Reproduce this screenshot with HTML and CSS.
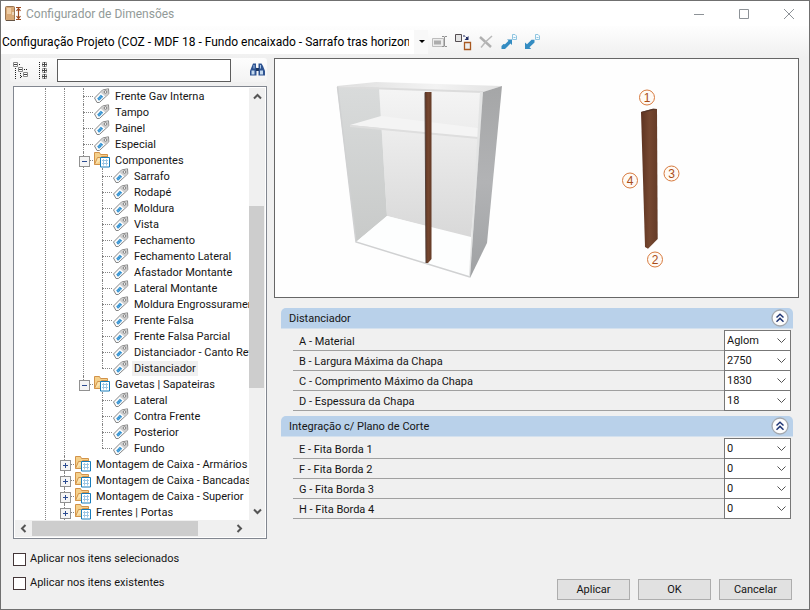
FILE: index.html
```html
<!DOCTYPE html>
<html lang="pt-BR">
<head>
<meta charset="utf-8">
<title>Configurador de Dimensões</title>
<link rel="stylesheet" href="styles.css">
</head>
<body>
<svg class="defs" aria-hidden="true">
  <defs>
    <symbol id="tag" viewBox="0 0 17 16">
      <path d="M1.500 10 9.500 2 15.500.800 15.800 5.800 6.400 14.500H4Z" fill="#fafafa" stroke="#858585" stroke-linejoin="round"/>
      <path d="M9.800 2.500 15 1.400l.3 4.200-2.900 2.800-4.600-3.600z" fill="#cfcfcf"/>
      <path d="M4.200 10.400 7.900 6.700 10.200 8.800 6 12.800Z" fill="#2f8fd0"/>
      <path d="m5.200 9.600 3 2.600M6.700 8.100l2.600 2.200" stroke="#8cc6ea" stroke-width=".6"/>
      <circle cx="12.500" cy="4" r="1.300" fill="#fff" stroke="#777" stroke-width=".9"/>
    </symbol>
    <symbol id="folder" viewBox="0 0 17 16">
      <path d="M1.500 12.500v-12h5l1 2h7v10z" fill="#f5d08a" stroke="#d2934a"/>
      <path d="m1.500 12.500 3-7h3l1-1h6" fill="#fbe3ad" stroke="#d2934a"/>
      <path d="M7.500 5.500h9v9.500h-9z" fill="#fff" stroke="#187cba"/>
      <path d="M9 8.500h6M9 11.500h6M10.500 7v6.500M13.500 7v6.500" stroke="#9cc6e4"/>
    </symbol>
    <symbol id="chevrons" viewBox="0 0 18 18">
      <circle cx="9" cy="9" r="8" fill="#fdfdfd" stroke="#a3a8ae" stroke-width="1.300"/>
      <path d="m5.500 8.500 3.500-3.300 3.500 3.300M5.500 12.700 9 9.400l3.500 3.300" fill="none" stroke="#1f3575" stroke-width="1.500"/>
    </symbol>
  </defs>
</svg>
<main class="window">
  <header class="titlebar">
    <svg class="app-icon" width="17" height="16" viewBox="0 0 17 16" aria-hidden="true">
      <rect x=".5" y=".5" width="9" height="14" rx="1" fill="#d9aa78" stroke="#987452"/>
      <path d="M2 2h4v6H2z" fill="#efcda5"/><path d="M8 6v3" stroke="#fff"/><path d="M1 14.500h9" stroke="#665443"/>
      <path d="M11 1.500h5M11 13.500h5M13.500 2v11m-2-8 2-2.500 2 2.500m-4 5 2 2.500 2-2.500" fill="none" stroke="#9c4a20" stroke-width="1.200"/>
    </svg>
    <h1>Configurador de Dimensões</h1>
    <button class="caption" aria-label="Minimizar"><svg width="12" height="12"><path d="M1 6.500h10" stroke="#8d9297"/></svg></button>
    <button class="caption" aria-label="Maximizar"><svg width="12" height="12"><path d="M1.500 1.500h9v9h-9z" fill="none" stroke="#8d9297"/></svg></button>
    <button class="caption" aria-label="Fechar"><svg width="12" height="12"><path d="m1 1 10 10M11 1 1 11" stroke="#8d9297"/></svg></button>
  </header>

  <div class="toolbar">
    <select class="project" aria-label="Configuração">
      <option>Configuração Projeto (COZ - MDF 18 - Fundo encaixado - Sarrafo tras horizontal)</option>
    </select>
    <button class="tool" aria-label="Renomear">
      <svg width="18" height="18"><path d="M1.500 5.500h11v8h-11z" fill="#ededed" stroke="#bdbdbd"/><path d="M3 7.500h7v4H3z" fill="#adadad"/><path d="M11 3.500h2l.500.500.500-.500h2M13.500 4v9M11 13.500h2l.500-.500.500.500h2" fill="none" stroke="#929292"/></svg>
    </button>
    <button class="tool" aria-label="Duplicar">
      <svg width="18" height="18"><path d="M1.500 1.500h6v7h-6z" fill="#e4e4e4" stroke="#554e52"/><path d="M10.500 9.500h6v7h-6z" fill="#eee" stroke="#a85820" stroke-width="1.300"/><path d="M9 3h2l3 3" fill="none" stroke="#1d2760" stroke-dasharray="2 1"/><path d="M14.500 3v4h-4z" fill="#1d2760"/></svg>
    </button>
    <button class="tool" aria-label="Excluir">
      <svg width="18" height="18"><path d="m3 4 11 10" stroke="#b0b0b0" stroke-width="2.400"/><path d="M15 3 9 8.500l-5 6" stroke="#b9b9b9" stroke-width="1.500" fill="none"/></svg>
    </button>
    <button class="tool" aria-label="Exportar">
      <svg width="18" height="18"><path d="m1.500 13 2-2 1.500.3 3.500-3.500L7 6.500h5V12l-1.500-1.500L7 14l-2 2H1.500z" fill="#348cc2"/><path d="M12.500 1.500h2.500l1.500 1.500v3.500h-4z" fill="#f5fbff" stroke="#8fc5e0"/><path d="M13.500 4.500h2" stroke="#8fc5e0"/></svg>
    </button>
    <button class="tool" aria-label="Importar">
      <svg width="18" height="18"><path d="M2 16V9.500l2 1.700 4.500-4.400h3v2.700l-5 4.700L8.200 16z" fill="#348cc2"/><path d="M12.500 1.500h2.500l1.500 1.500v3.500h-4z" fill="#f5fbff" stroke="#8fc5e0"/><path d="M13.500 4.500h2" stroke="#8fc5e0"/></svg>
    </button>
  </div>

  <div class="content">
    <section class="navigator">
      <div class="searchbar">
        <button class="tool" aria-label="Recolher tudo">
          <svg width="17" height="17" fill="none" stroke="#888"><path d="M.5.5h4v4h-4zM5.500 5.500h4v4h-4zM10.500 10.500h4v4h-4z" fill="#fff"/><path d="M1 2.500h3M6 7.500h3M11 12.500h3" stroke="#444"/><path d="M6 2.500h2M11 7.500h4M2.500 6v11M7.500 11v6M8 14.500h2" stroke="#222" stroke-dasharray="1 1"/></svg>
        </button>
        <button class="tool" aria-label="Expandir tudo">
          <svg width="17" height="17" fill="none" stroke="#999"><path d="M6.500.5h4v4h-4zM6.500 6.500h4v4h-4zM6.500 12.500h4v4h-4z" fill="#fff"/><path d="M6 2.500h5M6 8.500h5M6 14.500h5M8.500 0v5M8.500 6v5M8.500 12v5" stroke="#444"/><path d="M3.500 0v17" stroke="#222" stroke-dasharray="1 1"/></svg>
        </button>
        <input class="search" type="text" aria-label="Pesquisar">
        <button class="tool find" aria-label="Localizar">
          <svg width="17" height="16"><path d="M4 1.500h3V5l.5 2v6.500H1V9l2-5zM9.500 1.500h3l1.500 2.500 2 5v4.500H9.500V7V5z" fill="#2e5391"/><path d="M7 6h3v3H7z" fill="#1c3763"/><path d="M2.500 8.500h3v4h-3zM11 8.500h3v4h-3z" fill="#c4d9ee"/><path d="M5 3v3.500M11.500 3v3.500" stroke="#a9c6e6"/></svg>
        </button>
      </div>

      <div class="treebox">
        <div class="viewport">
          <ul class="tree">
            <li><ul>
              <li><ul>
                <li><div class="node"><svg><use href="#tag"/></svg><span>Frente Gav Interna</span></div></li>
                <li><div class="node"><svg><use href="#tag"/></svg><span>Tampo</span></div></li>
                <li><div class="node"><svg><use href="#tag"/></svg><span>Painel</span></div></li>
                <li><div class="node"><svg><use href="#tag"/></svg><span>Especial</span></div></li>
                <li><div class="node open"><svg><use href="#folder"/></svg><span>Componentes</span></div>
                  <ul>
                    <li><div class="node"><svg><use href="#tag"/></svg><span>Sarrafo</span></div></li>
                    <li><div class="node"><svg><use href="#tag"/></svg><span>Rodapé</span></div></li>
                    <li><div class="node"><svg><use href="#tag"/></svg><span>Moldura</span></div></li>
                    <li><div class="node"><svg><use href="#tag"/></svg><span>Vista</span></div></li>
                    <li><div class="node"><svg><use href="#tag"/></svg><span>Fechamento</span></div></li>
                    <li><div class="node"><svg><use href="#tag"/></svg><span>Fechamento Lateral</span></div></li>
                    <li><div class="node"><svg><use href="#tag"/></svg><span>Afastador Montante</span></div></li>
                    <li><div class="node"><svg><use href="#tag"/></svg><span>Lateral Montante</span></div></li>
                    <li><div class="node"><svg><use href="#tag"/></svg><span>Moldura Engrossuramento</span></div></li>
                    <li><div class="node"><svg><use href="#tag"/></svg><span>Frente Falsa</span></div></li>
                    <li><div class="node"><svg><use href="#tag"/></svg><span>Frente Falsa Parcial</span></div></li>
                    <li><div class="node"><svg><use href="#tag"/></svg><span>Distanciador - Canto Reto</span></div></li>
                    <li><div class="node selected"><svg><use href="#tag"/></svg><span>Distanciador</span></div></li>
                  </ul>
                </li>
                <li><div class="node open"><svg><use href="#folder"/></svg><span>Gavetas | Sapateiras</span></div>
                  <ul>
                    <li><div class="node"><svg><use href="#tag"/></svg><span>Lateral</span></div></li>
                    <li><div class="node"><svg><use href="#tag"/></svg><span>Contra Frente</span></div></li>
                    <li><div class="node"><svg><use href="#tag"/></svg><span>Posterior</span></div></li>
                    <li><div class="node"><svg><use href="#tag"/></svg><span>Fundo</span></div></li>
                  </ul>
                </li>
              </ul></li>
              <li><div class="node closed"><svg><use href="#folder"/></svg><span>Montagem de Caixa - Armários</span></div></li>
              <li><div class="node closed"><svg><use href="#folder"/></svg><span>Montagem de Caixa - Bancadas</span></div></li>
              <li><div class="node closed"><svg><use href="#folder"/></svg><span>Montagem de Caixa - Superior</span></div></li>
              <li class="continues"><div class="node closed"><svg><use href="#folder"/></svg><span>Frentes | Portas</span></div></li>
            </ul></li>
          </ul>
        </div>
        <div class="vscroll" aria-hidden="true">
          <svg width="9" height="9"><path d="m1 6.500 3.500-3.500L8 6.500" fill="none" stroke="#555" stroke-width="2"/></svg>
          <div class="vtrack"><div class="vthumb"></div></div>
          <svg width="9" height="9"><path d="M1 2.500 4.500 6 8 2.500" fill="none" stroke="#555" stroke-width="2"/></svg>
        </div>
        <div class="hscroll" aria-hidden="true">
          <svg width="9" height="9"><path d="M6.500 1 3 4.500 6.500 8" fill="none" stroke="#555" stroke-width="2"/></svg>
          <div class="htrack"><div class="hthumb"></div></div>
          <svg width="9" height="9"><path d="M2.500 1 6 4.500 2.500 8" fill="none" stroke="#555" stroke-width="2"/></svg>
        </div>
      </div>
    </section>

    <section class="details">
      <figure class="preview">
        <svg viewBox="275 59 523 238" role="img" aria-label="Distanciador no armário">
          <defs>
            <linearGradient id="left" x2="0" y2="1"><stop stop-color="#d9dbdb"/><stop offset="1" stop-color="#c8cac9"/></linearGradient>
            <linearGradient id="back" x2="0" y2="1"><stop stop-color="#f5f5f5"/><stop offset="1" stop-color="#d8d8d8"/></linearGradient>
            <linearGradient id="side" x2="0" y2="1"><stop stop-color="#a5a6a7"/><stop offset=".5" stop-color="#b2b3b5"/><stop offset="1" stop-color="#9fa1a3"/></linearGradient>
            <linearGradient id="top"><stop stop-color="#dedede"/><stop offset=".6" stop-color="#f3f3f3"/><stop offset="1" stop-color="#e2e2e2"/></linearGradient>
            <linearGradient id="wood"><stop stop-color="#5d3321"/><stop offset=".5" stop-color="#754730"/><stop offset="1" stop-color="#643b27"/></linearGradient>
          </defs>
          <path d="m379 87 105 4-13 147-84-22z" fill="url(#back)"/>
          <path d="m337 87 42 0 8 129-31 26z" fill="url(#left)"/>
          <path d="m387 216 84 21-1 40-114-35z" fill="#fdfefe"/>
          <path d="m350 125 31-9 97 12v10z" fill="#f4f4f4"/>
          <path d="m350 125 128 12v2l-128-12z" fill="#dedede"/>
          <path d="m337 86 39-4 126 4-19 6z" fill="url(#top)"/>
          <path d="m337 86 146 5v2L337 88z" fill="#dcdcdc"/>
          <path d="m480 92 3 0-13 186-1-3z" fill="#e3e4e4"/>
          <path d="m483 92 19-6-15 157-17 35z" fill="url(#side)"/>
          <path d="M337.500 87 356 242l114 35" fill="none" stroke="#d0d1d2" stroke-width="1.500"/>
          <path d="M425 92h6.500v167l-3.500 4h-2z" fill="url(#wood)"/>
          <path d="M425 92.500 426 263" stroke="#524039" stroke-width="1"/>
          <path d="m641 112 12-3.300 4 .3.700 130-9.700 9.700-3-1.700z" fill="url(#wood)"/>
          <path d="m641 112 12-3.300 4 .3-12 3.300z" fill="#55372b"/>
          <g class="badge">
            <circle cx="647" cy="97.500" r="7.500"/><text x="647" y="102">1</text>
            <circle cx="655" cy="259.500" r="7.500"/><text x="655" y="264">2</text>
            <circle cx="671.500" cy="173.500" r="7.500"/><text x="671.500" y="178">3</text>
            <circle cx="630" cy="180.500" r="7.500"/><text x="630" y="185">4</text>
          </g>
        </svg>
      </figure>

      <section class="group">
        <header><h2>Distanciador</h2><button aria-label="Recolher Distanciador"><svg width="18" height="18"><use href="#chevrons"/></svg></button></header>
        <div class="rows">
          <div class="row"><label for="a">A - Material</label><select id="a"><option>Aglom</option></select></div>
          <div class="row"><label for="b">B - Largura Máxima da Chapa</label><select id="b"><option>2750</option></select></div>
          <div class="row"><label for="c">C - Comprimento Máximo da Chapa</label><select id="c"><option>1830</option></select></div>
          <div class="row"><label for="d">D - Espessura da Chapa</label><select id="d"><option>18</option></select></div>
        </div>
      </section>
      <section class="group">
        <header><h2>Integração c/ Plano de Corte</h2><button aria-label="Recolher Integração"><svg width="18" height="18"><use href="#chevrons"/></svg></button></header>
        <div class="rows">
          <div class="row"><label for="e">E - Fita Borda 1</label><select id="e"><option>0</option></select></div>
          <div class="row"><label for="f">F - Fita Borda 2</label><select id="f"><option>0</option></select></div>
          <div class="row"><label for="g">G - Fita Borda 3</label><select id="g"><option>0</option></select></div>
          <div class="row"><label for="h">H - Fita Borda 4</label><select id="h"><option>0</option></select></div>
        </div>
      </section>
    </section>
  </div>

  <footer class="footer">
    <div class="checks">
      <label><input type="checkbox">Aplicar nos itens selecionados</label>
      <label><input type="checkbox">Aplicar nos itens existentes</label>
    </div>
    <div class="actions">
      <button>Aplicar</button>
      <button>OK</button>
      <button>Cancelar</button>
    </div>
  </footer>
</main>
</body>
</html>
```
FILE: styles.css
```css
* { box-sizing: border-box; }
body {
  margin: 0;
  background: #f0f0f0;
  color: #151515;
  font: 11px/16px Roboto, "Liberation Sans", sans-serif;
}
button, input, select { font: inherit; color: inherit; }
button { padding: 0; border: 0; background: none; }
svg { display: block; flex: none; }
h1, h2, ul, figure { margin: 0; padding: 0; font-size: inherit; font-weight: normal; }
ul { list-style: none; }
.defs { position: absolute; width: 0; height: 0; }

.window {
  display: flex;
  flex-direction: column;
  min-height: 100vh;
  border: 1px solid #707070;
}

.titlebar {
  display: flex;
  align-items: center;
  height: 25px;
  padding-left: 4px;
  background: #fff;
}
.titlebar h1 {
  flex: 1;
  margin-left: 4px;
  color: #929a98;
  font-size: 12px;
}
.caption { display: grid; place-items: center; width: 45px; height: 24px; }
.caption:last-child { margin-right: -2px; }

.toolbar {
  display: flex;
  align-items: center;
  gap: 5px;
  height: 31px;
  background: linear-gradient(#fefefe, #f0f0f0);
}
.project {
  appearance: none;
  width: 427px;
  height: 24px;
  margin-right: -2px;
  padding: 0 19px 0 1px;
  border: 0;
  border-radius: 0;
  background: url("data:image/svg+xml,%3Csvg xmlns='http://www.w3.org/2000/svg' width='14' height='24'%3E%3Cpath fill='%23f8f8f8' d='M0 0h14v24H0z'/%3E%3Cpath d='M5 10h6l-3 3z'/%3E%3C/svg%3E") right / 14px 24px no-repeat #fff;
  color: #000;
  font-size: 12px;
}
.tool { flex: none; }

.content {
  display: grid;
  grid-template-columns: 257px minmax(0, 1fr);
  gap: 7px;
  padding: 1px 10px 0 9px;
}

.searchbar {
  display: flex;
  align-items: center;
  gap: 6px;
  height: 24px;
  padding: 0 1px 0 3px;
  border-radius: 3px;
  background: linear-gradient(#fdfdfd, #f3f3f3);
}
.search {
  flex: 1;
  min-width: 0;
  height: 23px;
  margin: 0 12px 0 -2px;
  border: 1px solid #5d5d5d;
  border-radius: 0;
  background: #fff;
}

.treebox {
  display: grid;
  grid-template-columns: minmax(0, 1fr) 16px;
  margin: 4px 0 0 3px;
  padding: 1px;
  border: 1px solid #828790;
  background: #fff;
}
.viewport { overflow: hidden; white-space: nowrap; }
.tree { padding-left: 21px; }
.tree ul { padding-left: 19px; }
.tree li { position: relative; }
.tree li::before {
  content: "";
  position: absolute;
  inset: 0 auto 0 9px;
  border-left: 1px dotted #858585;
}
.tree ul li:last-child:not(.continues)::before { bottom: auto; height: 8px; }
.tree > li:last-child::before,
.tree > li > ul > li::before { bottom: 0; }
.node {
  position: relative;
  display: flex;
  align-items: center;
  height: 16px;
  padding-left: 19px;
}
.node::before {
  content: "";
  position: absolute;
  left: 9px;
  top: 8px;
  width: 10px;
  border-top: 1px dotted #858585;
}
.node svg { position: relative; width: 17px; height: 16px; margin-right: 3px; }
.node span { padding: 0 2px; line-height: 15px; }
.selected span { background: #f0f0f0; }
.open::after, .closed::after {
  content: "";
  position: absolute;
  left: 5px;
  top: 4px;
  width: 9px;
  height: 9px;
  border: 1px solid #919191;
  background:
    linear-gradient(#2c4c91, #2c4c91) center / 5px 1px no-repeat,
    #f5f5f5;
}
.closed::after {
  background:
    linear-gradient(#2c4c91, #2c4c91) center / 5px 1px no-repeat,
    linear-gradient(#2c4c91, #2c4c91) center / 1px 5px no-repeat,
    #f5f5f5;
}
.vscroll {
  display: flex;
  flex-direction: column;
  align-items: center;
  padding: 4px 0;
  background: #f0f0f0;
}
.vtrack { flex: 1; align-self: stretch; padding-top: 105px; }
.vthumb { width: 15px; height: 182px; background: #cdcdcd; }
.hscroll {
  grid-column: 1 / -1;
  display: flex;
  align-items: center;
  height: 17px;
  padding: 0 21px 0 4px;
  background: #f0f0f0;
}
.htrack { flex: 1; padding-left: 4px; }
.hthumb { width: 82%; height: 15px; background: #cdcdcd; }

.preview { border: 1px solid #666; background: #fefefe; }
.preview svg { width: 100%; height: auto; }
.badge circle { fill: #fffaf5; stroke: #d77a3e; }
.badge text { fill: #a94d18; font: 12px "Liberation Sans", sans-serif; text-anchor: middle; }

.group { margin: 10px 6px 0 7px; }
.group + .group { margin-top: 5px; }
.group header {
  display: flex;
  align-items: center;
  justify-content: space-between;
  height: 21px;
  padding: 0 4px 0 8px;
  border-bottom: 1px solid #d4e1ee;
  border-radius: 5px 5px 0 0;
  background: #b9d1ea;
}
.group h2 { padding-top: 1px; }
.rows { margin: 2px 2px 0 12px; }
.row {
  display: flex;
  align-items: center;
  justify-content: space-between;
  height: 20px;
  padding-left: 6px;
  border-bottom: 1px solid #a0a0a0;
}
.row label { padding-top: 2px; }
.row select {
  appearance: none;
  position: relative;
  align-self: stretch;
  width: 67px;
  margin: -1px 0;
  padding: 0 18px 0 2px;
  border: 1px solid #777;
  border-radius: 0;
  background: url("data:image/svg+xml,%3Csvg xmlns='http://www.w3.org/2000/svg' width='9' height='6'%3E%3Cpath d='M.5 .5l4 4 4-4' fill='none' stroke='%23555'/%3E%3C/svg%3E") right 4px center / 9px 6px no-repeat #fff;
}

.footer {
  flex: 1;
  display: flex;
  align-items: flex-end;
  justify-content: space-between;
  padding: 0 17px 9px 12px;
}
.checks { display: grid; gap: 8px; margin-bottom: 9px; }
.checks label { display: flex; align-items: center; gap: 4px; }
.checks input {
  appearance: none;
  width: 13px;
  height: 13px;
  margin: 0;
  border: 1px solid #443638;
  background: #fff;
}
.actions { display: flex; gap: 8px; }
.actions button {
  width: 73px;
  height: 21px;
  border: 1px solid #adadad;
  background: #e1e1e1;
}
```
